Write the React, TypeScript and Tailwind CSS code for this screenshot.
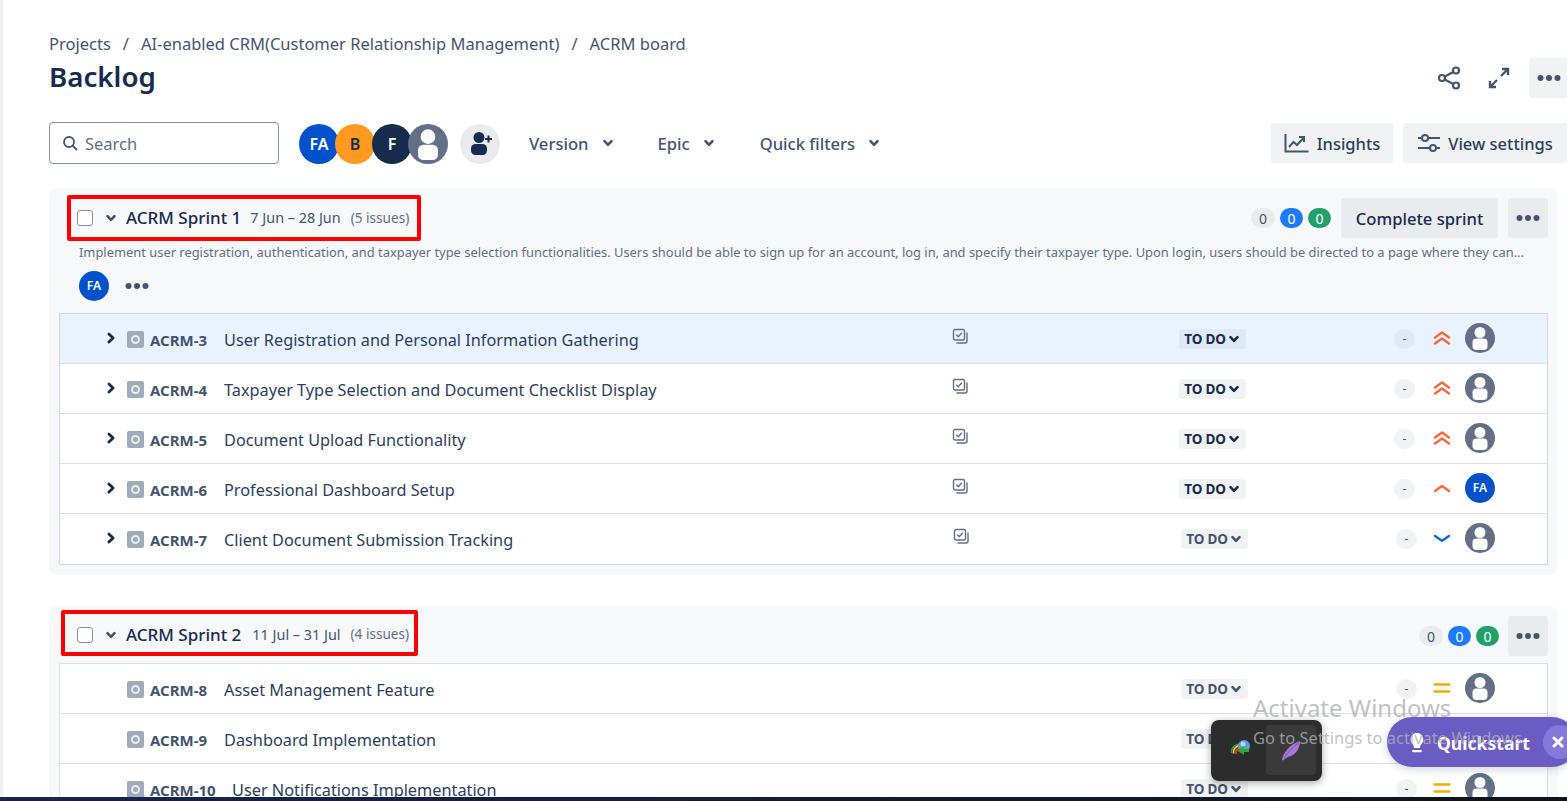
import React from "react";

const Dots = ({ className = "" }: { className?: string }) => (
  <svg width="24" height="8" viewBox="0 0 24 8" className={className} fill="#44546f">
    <circle cx="3.500" cy="4" r="3" /><circle cx="12" cy="4" r="3" /><circle cx="20.500" cy="4" r="3" />
  </svg>
);

const Chev = ({ down = true, size = 12, color = "#44546f", width = 2.6 }: { down?: boolean; size?: number; color?: string; width?: number }) => (
  <svg width={size} height={size} viewBox="0 0 12 12" fill="none" stroke={color} strokeWidth={width} strokeLinecap="round" strokeLinejoin="round">
    {down ? <path d="M2.500 4.200 6 7.800l3.500-3.600" /> : <path d="M4.200 2.500 7.800 6 4.200 9.500" />}
  </svg>
);

const UserAvatar = ({ size = 30 }: { size?: number }) => (
  <svg width={size} height={size} viewBox="0 0 30 30" className="shrink-0">
    <circle cx="15" cy="15" r="15" fill="#626f86" />
    <circle cx="15" cy="9.500" r="5.500" fill="#fff" />
    <rect x="7.500" y="15.500" width="15" height="11.500" rx="4" fill="#fff" />
  </svg>
);

const Initials = ({ t, bg, fg = "#fff", cls }: { t: string; bg: string; fg?: string; cls: string }) => (
  <div className={`${cls} rounded-full flex items-center justify-center font-semibold shrink-0`} style={{ backgroundColor: bg, color: fg }}>{t}</div>
);

const StoryIcon = () => (
  <div className="w-[17px] h-[17px] rounded-[2px] bg-[#a0aab8] flex items-center justify-center shrink-0 translate-y-[1px]">
    <div className="w-[9px] h-[9px] rounded-full border-[2px] border-[#e8ebef] bg-[#a0aab8]" />
  </div>
);

const ChildIcon = () => (
  <svg width="17" height="17" viewBox="0 0 17 17" fill="none" className="shrink-0">
    <rect x="1.500" y="1.500" width="11" height="10.500" rx="1.500" stroke="#626f86" strokeWidth="1.400" />
    <path d="M4.300 6.800 6.300 8.800 9.800 4.800" stroke="#626f86" strokeWidth="1.400" />
    <path d="M15 4.500V13a2 2 0 0 1-2 2H4.500" stroke="#626f86" strokeWidth="1.400" />
  </svg>
);

const Priority = ({ kind }: { kind: string }) => (
  <svg width="18" height="16" viewBox="0 0 18 16" fill="none" strokeWidth="2.300" strokeLinecap="round" strokeLinejoin="round" className="shrink-0">
    {kind === "highest" && (
      <g stroke="#f8683c">
        <path d="M2 7.500 9 2.500l7 5" /><path d="M2 13.500l7-5 7 5" />
      </g>
    )}
    {kind === "high" && <path d="M2 11l7-5 7 5" stroke="#f8683c" />}
    {kind === "low" && <path d="M2 6l7 4.800L16 6" stroke="#0c66e4" />}
    {kind === "medium" && (
      <g stroke="#f9a800"><path d="M1.500 4.500h15" /><path d="M1.500 11.500h15" /></g>
    )}
  </svg>
);

type Row = { k: string; s: string; p: string; fa?: boolean; hl?: boolean; chev?: boolean; sh?: number; child?: boolean; gap?: string };

const IssueRow = ({ r }: { r: Row }) => (
  <div className={`h-[50px] flex items-center border-b border-[#dcdfe4] shrink-0 last:border-b-0 last:pb-[1px] ${r.hl ? "bg-[#e9f2ff]" : "bg-white"}`}>
    <div className="w-[892px] flex items-center shrink-0">
      <div className="w-[67px] flex justify-end pr-[9px] shrink-0 -translate-y-[1px]">
        {r.chev && <Chev down={false} size={14} color="#172b4d" width={2.400} />}
      </div>
      <StoryIcon />
      <span className="ml-[6px] text-[15px] font-bold text-[#44546f] w-[74px] shrink-0 whitespace-nowrap translate-y-[2px]">{r.k}</span>
      <span className={`text-[16.300px] text-[#2c3e5d] whitespace-nowrap translate-y-[2px] ${r.gap ?? ""}`}>{r.s}</span>
    </div>
    <div className={`w-[227px] shrink-0 -translate-y-[2px] ${r.sh ? "pl-[1px]" : ""}`}>
      {r.child && <ChildIcon />}
    </div>
    <div className={`w-[67px] h-[20px] rounded-[3px] flex items-center justify-center gap-[1px] shrink-0 ${r.hl ? "bg-[#dfe8f5]" : "bg-[#f1f2f4]"} ${r.sh ? "translate-x-[2px]" : ""}`}>
      <span className={`text-[13.500px] font-bold tracking-[-0.2px] translate-y-[1px] -translate-x-[1px] ${r.sh ? "text-[#44546f]" : "text-[#172b4d]"}`}>TO DO</span>
      <Chev size={12} color={r.sh ? "#44546f" : "#172b4d"} />
    </div>
    <div className={`ml-[148px] w-[21px] h-[20px] rounded-full flex items-center justify-center text-[12px] text-[#44546f] shrink-0 ${r.hl ? "bg-[#dfe8f5]" : "bg-[#f1f2f4]"} ${r.sh ? "translate-x-[2px]" : ""}`}>-</div>
    <div className="ml-[18px] -translate-y-[1px]"><Priority kind={r.p} /></div>
    <div className="ml-[14px] -translate-y-[1px]">
      {r.fa ? <Initials t="FA" bg="#0052cc" cls="w-[30px] h-[30px] text-[12px]" /> : <UserAvatar />}
    </div>
  </div>
);

const Counts = ({ cls = "" }: { cls?: string }) => (
  <div className={`flex items-center gap-[5px] text-[14px] ${cls}`}>
    <div className="w-[24px] h-[20px] rounded-full bg-[#e9ebee] text-[#44546f] flex items-center justify-center">0</div>
    <div className="w-[23px] h-[20px] rounded-full bg-[#1d7afc] text-white flex items-center justify-center">0</div>
    <div className="w-[23px] h-[20px] rounded-full bg-[#22a06b] text-white flex items-center justify-center">0</div>
  </div>
);

const SprintHead = ({ title, date, n, cls, dateGap }: { title: string; date: string; n: string; cls: string; dateGap: string }) => (
  <div className={`flex items-center h-[46px] border-[4px] border-[#ff0000] rounded-[2px] ${cls}`}>
    <div className="w-[16px] h-[16px] rounded-[3px] border border-[#8590a2] bg-white shrink-0" />
    <div className="ml-[12px] w-[21px]"><Chev size={12} /></div>
    <span className="text-[17px] font-medium text-[#172b4d] whitespace-nowrap">{title}</span>
    <span className={`${dateGap} text-[14.400px] text-[#44546f] whitespace-nowrap`}>{date}</span>
    <span className="ml-[10px] text-[13.600px] text-[#626f86] whitespace-nowrap">{n}</span>
  </div>
);

const Filter = ({ t, cls }: { t: string; cls: string }) => (
  <div className={`flex items-center shrink-0 ${cls}`}>
    <span className="text-[16.600px] font-medium text-[#44546f] whitespace-nowrap translate-y-[1px]">{t}</span>
    <span className="ml-[13px]"><Chev size={12} /></span>
  </div>
);

const sprint1: Row[] = [
  { k: "ACRM-3", s: "User Registration and Personal Information Gathering", p: "highest", hl: true, chev: true, child: true },
  { k: "ACRM-4", s: "Taxpayer Type Selection and Document Checklist Display", p: "highest", chev: true, child: true },
  { k: "ACRM-5", s: "Document Upload Functionality", p: "highest", chev: true, child: true },
  { k: "ACRM-6", s: "Professional Dashboard Setup", p: "high", fa: true, chev: true, child: true },
  { k: "ACRM-7", s: "Client Document Submission Tracking", p: "low", chev: true, sh: 2, child: true },
];
const sprint2: Row[] = [
  { k: "ACRM-8", s: "Asset Management Feature", p: "medium", sh: 2 },
  { k: "ACRM-9", s: "Dashboard Implementation", p: "medium", sh: 2 },
  { k: "ACRM-10", s: "User Notifications Implementation", p: "medium", sh: 2, gap: "ml-[8px]" },
];

export default function App() {
  return (
    <div className="relative w-[1567px] h-[801px] overflow-hidden bg-white flex flex-col font-['Noto_Sans',sans-serif] text-[#172b4d]">
      <div className="flex-1 min-h-0 flex overflow-hidden">
        <div className="w-[3px] bg-[#eff0f2] shrink-0" />
        <main className="flex-1 pl-[46px] min-w-0">
          <div className="pt-[33px] h-[56px] text-[16.500px] text-[#44546f] leading-[22px] whitespace-nowrap">
            Projects<span className="mx-[12px]">/</span>AI-enabled CRM(Customer Relationship Management)<span className="mx-[12px]">/</span>ACRM board
          </div>
          <div className="flex items-center justify-between h-[42px] -mr-[2px]">
            <h1 className="text-[27.700px] font-semibold text-[#172b4d] leading-[40px] pb-[2px]">Backlog</h1>
            <div className="flex items-center shrink-0 mt-[2px]">
              <svg width="24" height="24" viewBox="0 0 24 24" fill="none" stroke="#44546f" strokeWidth="2.200">
                <circle cx="5" cy="12" r="3" /><circle cx="19" cy="4.500" r="3" /><circle cx="19" cy="19.500" r="3" />
                <path d="M7.700 10.500 16.300 6M7.700 13.500l8.600 4.500" />
              </svg>
              <svg width="24" height="24" viewBox="0 0 24 24" fill="none" stroke="#44546f" strokeWidth="2.400" className="ml-[26px]">
                <path d="M14 10 21 3M15 3h6v6M10 14l-7 7M3 15v6h6" />
              </svg>
              <div className="ml-[18px] w-[40px] h-[40px] rounded-[3px] bg-[#f1f2f4] flex items-center justify-center"><Dots /></div>
            </div>
          </div>
          <div className="flex items-center mt-[24px] h-[42px]">
            <div className="w-[230px] h-[42px] rounded-[4px] border border-[#8590a2] flex items-center pl-[12px] shrink-0">
              <svg width="16" height="16" viewBox="0 0 16 16" fill="none" stroke="#44546f" strokeWidth="1.800" strokeLinecap="round">
                <circle cx="7" cy="7" r="5" /><path d="M11 11l3.500 3.500" />
              </svg>
              <span className="ml-[7px] text-[16.500px] text-[#626f86] translate-y-[1px]">Search</span>
            </div>
            <div className="flex items-center ml-[20px] mt-[2px] shrink-0">
              <Initials t="FA" bg="#0052cc" cls="w-[40px] h-[40px] text-[16px] z-0" />
              <Initials t="B" bg="#ff991f" fg="#172b4d" cls="w-[40px] h-[40px] text-[16px] -ml-[4px] z-[1]" />
              <Initials t="F" bg="#172b4d" cls="w-[40px] h-[40px] text-[16px] -ml-[3px] z-[2]" />
              <div className="-ml-[4px] z-[3]"><UserAvatar size={40} /></div>
            </div>
            <div className="ml-[12px] mt-[2px] w-[40px] h-[40px] rounded-full bg-[#e9ebee] shrink-0">
              <svg width="40" height="40" viewBox="0 0 40 40" fill="#172b4d">
                <circle cx="19" cy="13.500" r="5.500" />
                <rect x="11" y="20" width="16" height="11" rx="4.500" />
                <path d="M25 14h2.500v-2.500h2V14H32v2h-2.500v2.500h-2V16H25z" />
              </svg>
            </div>
            <Filter t="Version" cls="ml-[29px]" />
            <Filter t="Epic" cls="ml-[44px]" />
            <Filter t="Quick filters" cls="ml-[45px]" />
            <div className="ml-auto flex items-center gap-[10px] shrink-0">
              <div className="h-[40px] w-[122px] rounded-[3px] bg-[#f1f2f4] flex items-center justify-center gap-[8px]">
                <svg width="25" height="21" viewBox="0 0 25 21" fill="none" stroke="#44546f" strokeWidth="2">
                  <path d="M1.500 1v17.500h23" /><path d="M5 14l4.500-5 3.500 3 6-6.500" /><path d="M15 4h5v5" />
                </svg>
                <span className="text-[16.500px] font-medium text-[#2c3e5d] translate-y-[1px]">Insights</span>
              </div>
              <div className="h-[40px] w-[164px] rounded-[3px] bg-[#f1f2f4] flex items-center justify-center gap-[7px]">
                <svg width="24" height="20" viewBox="0 0 24 20" fill="none" stroke="#44546f" strokeWidth="2">
                  <path d="M1 5h4M11 5h12M1 15h12M19 15h4" />
                  <circle cx="8" cy="5" r="3" /><circle cx="16" cy="15" r="3" />
                </svg>
                <span className="text-[16.500px] font-medium text-[#2c3e5d] whitespace-nowrap translate-y-[1px]">View settings</span>
              </div>
            </div>
          </div>

          <section className="mt-[24px] mr-[9px] h-[387px] rounded-[8px] bg-[#f7f8f9] px-[10px]">
            <div className="flex items-center justify-between h-[60px]">
              <SprintHead title="ACRM Sprint 1" date="7 Jun – 28 Jun" n="(5 issues)" cls="ml-[8px] w-[354px] pl-[6px]" dateGap="ml-[9px]" />
              <div className="flex items-center">
                <Counts />
                <div className="ml-[10px] h-[40px] w-[157px] rounded-[3px] bg-[#e9ebee] flex items-center justify-center text-[16.600px] font-medium text-[#172b4d]"><span className="translate-y-[1px]">Complete sprint</span></div>
                <div className="ml-[10px] w-[40px] h-[40px] rounded-[3px] bg-[#e9ebee] flex items-center justify-center"><Dots /></div>
              </div>
            </div>
            <div className="pl-[20px] pr-[10px] h-[20px] text-[12.900px] leading-[20px] text-[#626f86] whitespace-nowrap overflow-hidden -mt-[6px]">
              Implement user registration, authentication, and taxpayer type selection functionalities. Users should be able to sign up for an account, log in, and specify their taxpayer type. Upon login, users should be directed to a page where they can...
            </div>
            <div className="pl-[20px] flex items-center h-[30px] mt-[9px]">
              <Initials t="FA" bg="#0052cc" cls="w-[30px] h-[30px] text-[12px]" />
              <Dots className="ml-[16px]" />
            </div>
            <div className="mt-[12px] border border-[#cfd6e1] flex flex-col">
              {sprint1.map((r) => <IssueRow key={r.k} r={r} />)}
            </div>
          </section>

          <section className="mt-[31px] mr-[9px] rounded-t-[8px] bg-[#f7f8f9] px-[10px] h-[300px]">
            <div className="flex items-center justify-between h-[57px]">
              <SprintHead title="ACRM Sprint 2" date="11 Jul – 31 Jul" n="(4 issues)" cls="ml-[2px] w-[357px] pl-[12px] pt-[3px] -mt-[3px]" dateGap="ml-[11px]" />
              <div className="flex items-center mt-[3px]">
                <Counts cls="translate-x-[1px]" />
                <div className="ml-[10px] w-[40px] h-[40px] rounded-[3px] bg-[#e9ebee] flex items-center justify-center"><Dots /></div>
              </div>
            </div>
            <div className="border-t border-x border-[#dcdfe4] flex flex-col">
              {sprint2.map((r) => <IssueRow key={r.k} r={r} />)}
            </div>
          </section>
        </main>
      </div>
      <div className="h-[4px] shrink-0 bg-gradient-to-r from-[#16264d] to-[#10131c]" />

      {/* floating overlays */}
      <div className="absolute left-[1211px] top-[720px] w-[111px] h-[61px] rounded-[8px] bg-[#2c2c2c] shadow-[0_2px_8px_rgba(0,0,0,0.35)]">
        <svg width="24" height="22" viewBox="0 0 24 22" fill="none" className="absolute left-[18px] top-[18px]">
          <path d="M2.500 15C2 10 6 6 11 6" stroke="#2f9e44" strokeWidth="1.500" />
          <path d="M4.500 15.500C4 11 7 8 11 7.500" stroke="#f6c83d" strokeWidth="1.800" />
          <path d="M7 16C6.500 13 8 10.500 11 9.500" stroke="#e0392b" strokeWidth="2" />
          <circle cx="15" cy="8" r="6" fill="#5d9bd6" />
          <circle cx="14" cy="6" r="2.500" fill="#b6d4ee" />
          <path d="M20 11v3h-5l0 3-7-4.500 7-4.500v3z" fill="#35a82f" />
        </svg>
        <div className="absolute left-[55px] top-[5px] w-[50px] h-[50px] rounded-[4px] bg-[#3a3a3a]">
          <svg width="24" height="24" viewBox="0 0 24 24" className="absolute left-[13px] top-[13px]">
            <path d="M3 22c1-7 8-16 18-19 0 7-4 13-9 15-3 .5-5 2-8 4.500z" fill="#a678d8" />
            <path d="M5 20C9 14 14 9 20 4.500" stroke="#6a4a9c" strokeWidth=".8" fill="none" />
          </svg>
        </div>
      </div>
      <div className="absolute left-[1387px] top-[717px] w-[190px] h-[50px] rounded-[25px] bg-[#6b5cc4] shadow-[0_2px_10px_rgba(9,30,66,0.2)] flex items-center pl-[23px]">
        <svg width="14" height="22" viewBox="0 0 14 22" fill="#fff" className="translate-y-[1px]">
          <path d="M7 1a6.500 6.500 0 0 0-4.500 11c.8 1 1.300 2 1.500 4h6c.2-2 .7-3 1.500-4A6.500 6.500 0 0 0 7 1z" />
          <rect x="2" y="18" width="10" height="2.200" rx="1.100" />
        </svg>
        <span className="ml-[13px] text-[17.600px] font-bold text-white whitespace-nowrap translate-y-[1px]">Quickstart</span>
        <div className="ml-[13px] w-[34px] h-[34px] rounded-full bg-[#8777d9] flex items-center justify-start pl-[9px] shrink-0">
          <svg width="12" height="12" viewBox="0 0 12 12" stroke="#fff" strokeWidth="3" strokeLinecap="round"><path d="M2 2l8 8M10 2l-8 8" /></svg>
        </div>
      </div>
      <div className="absolute left-[1253px] top-[692px] pointer-events-none text-[#b0b0b0]/80 whitespace-nowrap">
        <div className="text-[24px] leading-[32px]">Activate Windows</div>
        <div className="text-[16.500px] leading-[22px] mt-[3px]">Go to Settings to activate Windows.</div>
      </div>
    </div>
  );
}
